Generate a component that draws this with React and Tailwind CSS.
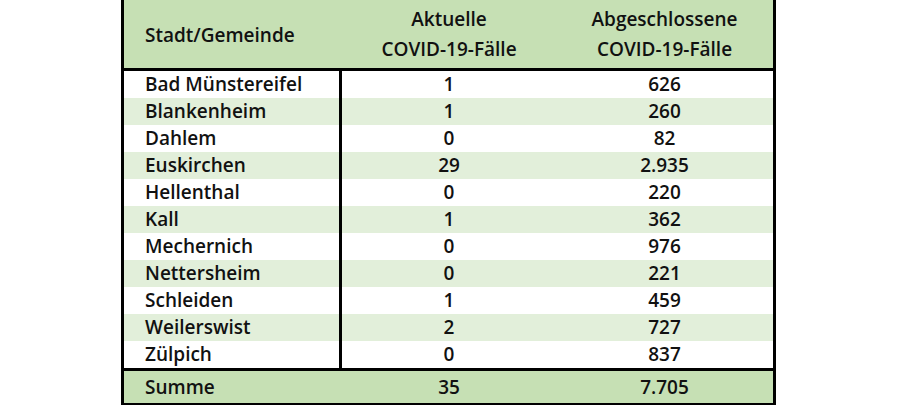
const rows = [
  ['Bad Münstereifel', '1', '626'],
  ['Blankenheim', '1', '260'],
  ['Dahlem', '0', '82'],
  ['Euskirchen', '29', '2.935'],
  ['Hellenthal', '0', '220'],
  ['Kall', '1', '362'],
  ['Mechernich', '0', '976'],
  ['Nettersheim', '0', '221'],
  ['Schleiden', '1', '459'],
  ['Weilerswist', '2', '727'],
  ['Zülpich', '0', '837'],
];

export default function App() {
  return (
    <div className="w-[901px] h-[405px] bg-white overflow-hidden text-[#111] font-semibold text-[19px]" style={{ fontFamily: '"Open Sans", "Liberation Sans", sans-serif' }}>
      <div className="ml-[121px] w-[655px] border-x-[3px] border-b-[3px] border-black">
        {/* Kopfzeile */}
        <div className="grid grid-cols-[218px_214px_1fr] h-[71px] bg-[#c6e0b4] border-b-[3px] border-black items-center leading-[30px]">
          <div className="pl-[21px] pt-[2px]">Stadt/Gemeinde</div>
          <div className="text-center">Aktuelle<br />COVID-19-Fälle</div>
          <div className="text-center">Abgeschlossene<br />COVID-19-Fälle</div>
        </div>

        {rows.map(([name, akt, abg], i) => (
          <div key={name} className={`grid grid-cols-[218px_214px_1fr] h-[27px] items-center leading-[27px] ${i % 2 ? 'bg-[#e2efda]' : 'bg-white'}`}>
            <div className="pl-[21px] border-r-[3px] border-black h-full">{name}</div>
            <div className="text-center">{akt}</div>
            <div className="text-center">{abg}</div>
          </div>
        ))}

        {/* Summe */}
        <div className="grid grid-cols-[218px_214px_1fr] h-[35px] items-center bg-[#c6e0b4] border-t-[3px] border-black">
          <div className="pl-[21px]">Summe</div>
          <div className="text-center">35</div>
          <div className="text-center">7.705</div>
        </div>
      </div>
    </div>
  );
}
